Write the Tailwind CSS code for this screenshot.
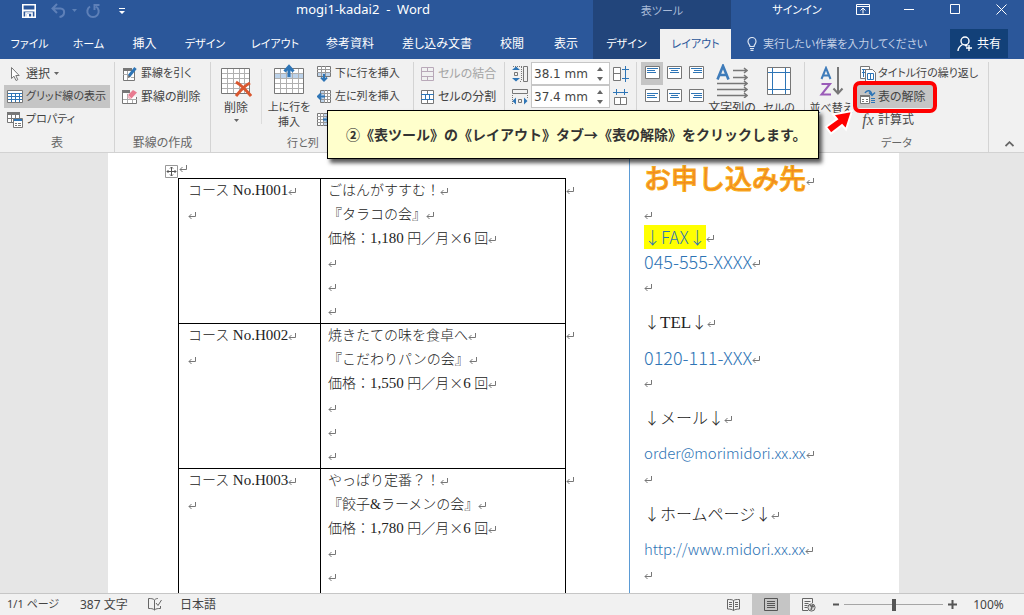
<!DOCTYPE html>
<html lang="ja">
<head>
<meta charset="utf-8">
<title>mogi1-kadai2 - Word</title>
<script src="https://cdn.jsdelivr.net/npm/@tailwindcss/browser@4"></script>
</head>
<body class="flex h-screen flex-col overflow-hidden bg-[#e6e6e6] font-['Noto_Sans','Noto_Sans_CJK_JP',sans-serif] text-xs text-[#444] [font-feature-settings:'palt']">

<svg class="hidden" aria-hidden="true">
  <symbol id="ret" viewBox="0 0 8 8"><path d="M7.500 0v4.500H1M3.500 2L1 4.500L3.500 7" fill="none" stroke="#777"/></symbol>
  <symbol id="down" viewBox="0 0 5 3"><path d="M0 0h5L2.500 3z" fill="#666"/></symbol>
</svg>

<header class="shrink-0 bg-[#2b579a] text-white">
  <div class="flex h-[29px]">
    <div class="flex flex-1">
      <div class="flex w-[133px] shrink-0 items-center pb-2 pl-[21px]">
        <button aria-label="上書き保存"><svg class="size-4" viewBox="0 0 16 16" fill="none" stroke="#fff" stroke-width="1.6"><path d="M1.800 1.800h12.400v12.400H1.800z"/><path d="M2 7.500h12" stroke-width="2"/><path d="M5 14v-4h6v4" /><path d="M6 11h2v3H6z" fill="#fff" stroke="none"/></svg></button>
        <button aria-label="元に戻す" class="ml-[14px]"><svg class="size-4" viewBox="0 0 16 16" fill="none" stroke="#5e80b8" stroke-width="2"><path d="M6 1L1.500 5.500L6 10M2 5.500h7.500c5 0 5 7.500-1 8.500"/></svg></button>
        <svg class="ml-[5px] h-[3px] w-[5px] opacity-60" viewBox="0 0 5 3"><path d="M0 0h5L2.500 3z" fill="#7d9ccb"/></svg>
        <button aria-label="やり直し" class="ml-[8px]"><svg class="size-4" viewBox="0 0 16 16" fill="none" stroke="#5e80b8" stroke-width="2"><path d="M5 3.500a5.700 5.700 0 1 0 6 0M9.500 7V2h5"/></svg></button>
        <button aria-label="クイック アクセス ツール バーのユーザー設定" class="ml-[18px]"><svg class="h-2 w-[6px]" viewBox="0 0 6 8" fill="#fff"><path d="M0 1h6v1H0zM0 4h6L3 7z"/></svg></button>
      </div>
      <div class="flex-1 text-center text-[13px] leading-[18px]">mogi1-kadai2&nbsp; -&nbsp; Word</div>
    </div>
    <div class="w-[138px] bg-[#22457b] pt-[2px] text-center text-[11px] leading-[18px] text-[#a9bbd8]">表ツール</div>
    <div class="flex w-[293px] items-start">
      <button class="ml-[41px] w-[50px] text-[11px] leading-[20px] whitespace-nowrap">サインイン</button>
      <button aria-label="リボンの表示オプション" class="mt-1 ml-[34px]"><svg class="h-[11px] w-[14px]" viewBox="0 0 14 11" fill="none" stroke="#fff"><path d="M.5.5h13v10H.5zM.5 2.500h13M7 9.500V4M4.500 6.500L7 4l2.500 2.500"/></svg></button>
      <button aria-label="最小化" class="mt-1 ml-[34px]"><svg class="h-[11px] w-[10px]" viewBox="0 0 10 11" stroke="#fff"><path d="M0 5.500h10"/></svg></button>
      <button aria-label="最大化" class="mt-1 ml-[36px]"><svg class="size-[11px]" viewBox="0 0 11 11" fill="none" stroke="#fff"><path d="M.5 .5h9v9H.5z"/></svg></button>
      <button aria-label="閉じる" class="mt-1 ml-[35px]"><svg class="size-[11px]" viewBox="0 0 11 11" stroke="#fff"><path d="M.5.5l10 10M10.500.5l-10 10"/></svg></button>
    </div>
  </div>
  <div class="flex h-[30px]">
    <nav class="flex flex-1" role="tablist">
      <button role="tab" class="w-[59px] text-[11px]">ファイル</button>
      <button role="tab" class="w-[59px] text-[11px]">ホーム</button>
      <button role="tab" class="w-[53px]">挿入</button>
      <button role="tab" class="w-[68px] text-[11px]">デザイン</button>
      <button role="tab" class="w-[72px] text-[11px]">レイアウト</button>
      <button role="tab" class="w-[78px]">参考資料</button>
      <button role="tab" class="w-[96px]">差し込み文書</button>
      <button role="tab" class="w-[54px]">校閲</button>
      <button role="tab" class="w-[54px]">表示</button>
      <button role="tab" class="w-[67px] bg-[#22457b] text-[11px]">デザイン</button>
      <button role="tab" aria-selected="true" class="w-[71px] bg-[#f1f1f1] text-[11px] text-[#2b579a]">レイアウト</button>
    </nav>
    <div class="flex w-[293px] items-center">
      <button class="ml-4 flex items-center gap-[6px] text-[11px] text-[#c3d0e6]"><svg class="h-[14px] w-[10px]" viewBox="0 0 10 14" fill="none" stroke="#dbe4f2" stroke-width="1.200"><path d="M3 9.500C3 7.500 1 7 1 4.500a4 4 0 0 1 8 0C9 7 7 7.500 7 9.500zM3 11.500h4M3.500 13.300h3"/></svg>実行したい作業を入力してください</button>
      <button class="mr-4 ml-auto flex h-[29px] w-[58px] items-center justify-center gap-1 self-start bg-[#124078]"><svg class="size-4" viewBox="0 0 16 16" fill="none" stroke="#fff" stroke-width="1.400"><circle cx="8" cy="5" r="4"/><path d="M1 15c0-3 2-5 4.500-6.500M8 9.500c1 0 2 .2 2.500.6M12 9v6M9 12h6"/></svg>共有</button>
    </div>
  </div>
</header>

<section class="relative flex h-[94px] shrink-0 border-b border-[#d2d2d2] bg-[#f1f1f1] pt-[3px] whitespace-nowrap" aria-label="表ツール レイアウト">

  <div class="flex w-[115px] flex-col border-r border-[#d4d4d4] pr-1 pl-1">
    <button class="flex h-[23px] items-center gap-[3px] pl-[3px]"><svg class="size-4" viewBox="0 0 16 16" fill="#fff" stroke="#777"><path d="M4.500 1.500v11l2.500-2.300 2 4.300 1.800-.8-2-4.200h3.400z"/></svg>選択<svg class="ml-px h-[3px] w-[5px]"><use href="#down"/></svg></button>
    <button class="flex h-[23px] items-center gap-[3px] bg-[#c5c5c5] pl-[3px] text-[11px]"><svg class="h-[13px] w-4" viewBox="0 0 16 13"><path d="M.5.5h15v12H.5z" fill="#fff" stroke="#777"/><path d="M1 3.500h14M1 6.500h14M1 9.500h14M4.500 3v9M8.500 3v9M12.500 3v9" stroke="#2e75b6"/></svg>グリッド線の表示</button>
    <button class="flex h-[23px] items-center gap-[3px] pl-[3px] text-[11px]"><svg class="size-4" viewBox="0 0 16 16" fill="#fff" stroke="#777"><path d="M.5.5h12v10H.5z"/><path d="M0 0h13v3H0z" fill="#777" stroke="none"/><path d="M4.500 3v8M8.500 3v8M0 6.500h13"/><path d="M6.500 6.500h9v9h-9z"/><path d="M7 7h8v2H7z" fill="#2e75b6" stroke="none"/><path d="M8 11.500h2M11 11.500h3M8 13.500h2M11 13.500h3"/></svg>プロパティ</button>
    <div class="pt-[3px] text-center leading-[18px] text-[#666]">表</div>
  </div>

  <div class="flex w-[96px] flex-col border-r border-[#d4d4d4]">
    <button class="flex h-[23px] items-center gap-[3px] pl-[7px] text-[11px]"><svg class="size-4" viewBox="0 0 16 16" fill="none"><path d="M1.500 3v11.500h11V3" fill="#fff" stroke="#777"/><path d="M1 2h9v3H1z" fill="#777"/><path d="M5.500 5v9M1 8.500h5M9 11.500h3" stroke="#aaa"/><path d="M7 10l6.500-8" stroke="#2e75b6" stroke-width="3"/><path d="M6 12l.5-3 2 2z" fill="#555"/></svg>罫線を引く</button>
    <button class="flex h-[23px] items-center gap-[3px] pl-[7px]"><svg class="size-4" viewBox="0 0 16 16" fill="none"><path d="M.5 3v11.500h14V8" fill="#fff" stroke="#777"/><path d="M0 1h8v3H0z" fill="#777"/><path d="M5.500 5v9M10.500 10v4M1 10.500h14" stroke="#aaa"/><path d="M6 6l5-5 4 2.500-5.500 6z" fill="#e87b90"/><path d="M6 6l3.500 3.500L8 10.500 5.500 8.500z" fill="#f3b6c1"/></svg>罫線の削除</button>
    <div class="mt-[23px] pt-[3px] text-center leading-[18px] text-[#666]">罫線の作成</div>
  </div>

  <div class="w-[203px] border-r border-[#d4d4d4]">
    <div class="flex h-[69px]">
      <button class="flex w-[50px] flex-col items-center pt-[5px]"><svg class="h-[31px] w-8 shrink-0" viewBox="0 0 32 31" fill="none"><path d="M1.500 1.500h28v25h-28z" fill="#fff" stroke="#777"/><path d="M7.500 2v24M13.500 2v24M19.500 2v24M24.500 2v24M2 6.500h27M2 11.500h27M2 16.500h27M2 21.500h27" stroke="#b0b0b0"/><path d="M16 15c5 3 10 8 15 14M30 16c-6 3-10 8-14 13" stroke="#d9572f" stroke-width="3"/></svg><span class="leading-[20px]">削除</span><svg class="mt-px h-[3px] w-[5px]"><use href="#down"/></svg></button>
      <div class="mt-[7px] h-[55px] w-px bg-[#dcdcdc]"></div>
      <button class="flex w-[54px] flex-col items-center pt-[2px] text-[11px]"><svg class="h-8 w-[30px] shrink-0" viewBox="0 0 30 32" fill="none"><path d="M.5 4.500h29v25H.5z" fill="#fff" stroke="#777"/><path d="M1 9h28v5H1z" fill="#bdd3ea"/><path d="M6.500 5v24M12.500 5v24M18.500 5v24M24.500 5v24M1 9.500h28M1 14.500h28M1 19.500h28M1 24.500h28" stroke="#b0b0b0"/><path d="M15 13V4M10.500 7.500L15 2.500l4.500 5" stroke="#2e75b6" stroke-width="3"/></svg><span class="pt-[3px] leading-[15px]">上に行を<br>挿入</span></button>
      <div class="flex flex-col text-[11px]">
        <button class="flex h-[23px] items-center gap-1 pl-px"><svg class="h-4 w-[14px]" viewBox="0 0 14 16" fill="none"><path d="M.5.500h13v10H.5z" fill="#fff" stroke="#777"/><path d="M1 7h12v3H1z" fill="#bdd3ea"/><path d="M4.500 0v10M8.500 0v10M0 3.500h14M0 6.500h14" stroke="#999"/><path d="M7 8v6M4 11.500l3 3 3-3" stroke="#2e75b6" stroke-width="2"/></svg>下に行を挿入</button>
        <button class="flex h-[23px] items-center gap-1 pl-px"><svg class="h-4 w-[14px]" viewBox="0 0 14 16" fill="none"><path d="M3.500 1.500h10v12h-10z" fill="#fff" stroke="#777"/><path d="M4 2h3v11H4z" fill="#bdd3ea"/><path d="M7.500 1v13M10.500 1v13M4 4.500h10M4 7.500h10M4 10.500h10" stroke="#999"/><path d="M8 7.500H1M4 4.500l-3 3 3 3" stroke="#2e75b6" stroke-width="2"/></svg>左に列を挿入</button>
        <button aria-label="右に列を挿入" class="flex h-[23px] items-center pl-px"><svg class="h-4 w-[14px]" viewBox="0 0 14 16" fill="none"><path d="M.5 1.500h10v12H.5z" fill="#fff" stroke="#777"/><path d="M7 2h3v11H7z" fill="#bdd3ea"/><path d="M3.500 1v13M6.500 1v13M0 4.500h10M0 7.500h10M0 10.500h10" stroke="#999"/><path d="M6 7.500h7M10 4.500l3 3-3 3" stroke="#2e75b6" stroke-width="2"/></svg></button>
      </div>
    </div>
    <div class="pt-[3px] pl-[76px] text-[11px] leading-[18px] text-[#666]">行と列</div>
  </div>

  <div class="w-[91px] border-r border-[#d4d4d4]">
    <button disabled class="flex h-[23px] items-center gap-1 pl-[7px] text-[#a5a5a5]"><svg class="h-[14px] w-[13px]" viewBox="0 0 13 14" fill="none" stroke="#b9a9b9"><path d="M.5.5h12v13H.5zM0 4.500h13M0 9.500h13M6.500 0v4M6.500 10v4"/></svg>セルの結合</button>
    <button class="flex h-[23px] items-center gap-1 pl-[7px]"><svg class="h-[14px] w-[13px]" viewBox="0 0 13 14" fill="#fff" stroke="#777"><path d="M.5.5h12v13H.5zM6.500 0v4M6.500 10v4"/><path d="M0 4.500h13M0 9.500h13M4.500 5v4M8.500 5v4" stroke="#2e75b6"/></svg>セルの分割</button>
  </div>

  <div class="w-[132px] border-r border-[#d4d4d4] pl-[7px]">
    <div class="flex h-[23px] items-center gap-[3px]">
      <svg class="size-4 shrink-0" viewBox="0 0 16 16" fill="none"><path d="M11.500.5h4v15h-4z" stroke="#777"/><path d="M1 .5h9M8 15.500h2M9.500 1v14" stroke="#777" stroke-dasharray="1 1"/><path d="M2.500 6.500h3v3h-3z" stroke="#777"/><path d="M0 4l4-3.500L8 4zM0 12l4 3.500L8 12z" fill="#2e75b6"/></svg>
      <div class="flex h-[23px] w-[79px] shrink-0 items-center border border-[#c6c6c6] bg-white"><input aria-label="高さ" value="38.1 mm" class="w-[65px] pl-[2px] font-['DejaVu_Sans'] text-xs text-[#444] outline-none"><span class="flex flex-col gap-[6px]"><button aria-label="高さを増やす" class="block"><svg class="block h-[4px] w-[6px]" viewBox="0 0 6 4"><path d="M0 4h6L3 0z" fill="#666"/></svg></button><button aria-label="高さを減らす" class="block"><svg class="block h-[4px] w-[6px]" viewBox="0 0 6 4"><path d="M0 0h6L3 4z" fill="#666"/></svg></button></span></div>
      <button aria-label="高さを揃える"><svg class="block size-4" viewBox="0 0 16 16" fill="none"><path d="M.5 1.500h7v13h-7zM0 7.500h8" fill="#fff" stroke="#777"/><path d="M9 3.500h7M9 12.500h7M12.500 0v16" stroke="#2e75b6"/></svg></button>
    </div>
    <div class="flex h-[23px] items-center gap-[3px]">
      <svg class="size-4 shrink-0" viewBox="0 0 16 16" fill="none"><path d="M.5.5h15v4H.5z" stroke="#777"/><path d="M.5 6v9M15.500 6v3" stroke="#777" stroke-dasharray="1 1"/><path d="M6.500 10.500h3v3h-3z" stroke="#777"/><path d="M4 8.500l-3.500 3.500L4 15.500zM12 8.500l3.500 3.500-3.500 3.500z" fill="#2e75b6"/></svg>
      <div class="flex h-[23px] w-[79px] shrink-0 items-center border border-[#c6c6c6] bg-white"><input aria-label="幅" value="37.4 mm" class="w-[65px] pl-[2px] font-['DejaVu_Sans'] text-xs text-[#444] outline-none"><span class="flex flex-col gap-[6px]"><button aria-label="幅を増やす" class="block"><svg class="block h-[4px] w-[6px]" viewBox="0 0 6 4"><path d="M0 4h6L3 0z" fill="#666"/></svg></button><button aria-label="幅を減らす" class="block"><svg class="block h-[4px] w-[6px]" viewBox="0 0 6 4"><path d="M0 0h6L3 4z" fill="#666"/></svg></button></span></div>
      <button aria-label="幅を揃える"><svg class="block size-4" viewBox="0 0 16 16" fill="none"><path d="M1.500 8.500h12v7h-12zM7.500 8v8" fill="#fff" stroke="#777"/><path d="M0 3.500h15M3.500 0v6M11.500 0v6" stroke="#2e75b6"/></svg></button>
    </div>
  </div>

  <div class="flex w-[168px] border-r border-[#d4d4d4] pl-1">
    <div class="grid h-[46px] w-[66px] grid-cols-3">
      <button aria-label="両端揃え (上)" class="flex items-start justify-center bg-[#c5c5c5] pt-1"><svg class="h-[13px] w-[15px]" viewBox="0 0 15 13"><path d="M.5.5h14v12H.5z" fill="#fff" stroke="#777"/><path d="M2 2.500h11M2 4.500h8M2 6.500h9" stroke="#2e75b6"/></svg></button>
      <button aria-label="上揃え (中央)" class="flex items-start justify-center pt-1"><svg class="h-[13px] w-[15px]" viewBox="0 0 15 13"><path d="M.5.5h14v12H.5z" fill="#fff" stroke="#777"/><path d="M2 2.500h11M4 4.500h7M3 6.500h9" stroke="#2e75b6"/></svg></button>
      <button aria-label="上揃え (右)" class="flex items-start justify-center pt-1"><svg class="h-[13px] w-[15px]" viewBox="0 0 15 13"><path d="M.5.5h14v12H.5z" fill="#fff" stroke="#777"/><path d="M2 2.500h11M5 4.500h8M4 6.500h9" stroke="#2e75b6"/></svg></button>
      <button aria-label="両端揃え (中央)" class="flex items-start justify-center pt-1"><svg class="h-[13px] w-[15px]" viewBox="0 0 15 13"><path d="M.5.5h14v12H.5z" fill="#fff" stroke="#777"/><path d="M2 4.500h11M2 6.500h8M2 8.500h10" stroke="#2e75b6"/></svg></button>
      <button aria-label="中央揃え" class="flex items-start justify-center pt-1"><svg class="h-[13px] w-[15px]" viewBox="0 0 15 13"><path d="M.5.5h14v12H.5z" fill="#fff" stroke="#777"/><path d="M2 4.500h11M4 6.500h7M3 8.500h9" stroke="#2e75b6"/></svg></button>
      <button aria-label="中央揃え (右)" class="flex items-start justify-center pt-1"><svg class="h-[13px] w-[15px]" viewBox="0 0 15 13"><path d="M.5.5h14v12H.5z" fill="#fff" stroke="#777"/><path d="M2 4.500h11M5 6.500h8M4 8.500h9" stroke="#2e75b6"/></svg></button>
    </div>
    <button class="flex w-[50px] flex-col items-center pt-[2px]"><svg class="h-[34px] w-8 shrink-0" viewBox="0 0 32 34" fill="none"><path d="M1.500 15.500L7 2l5.500 13.500M3.500 11h7" stroke="#3f7cba" stroke-width="2.600"/><path d="M17 6.500h14M17 13.500h14M1 19.500h30M1 25.500h30M1 31.500h30M28 4l3 2.500L28 9M28 11l3 2.500-3 2.500M28 17l3 2.500-3 2.500M28 23l3 2.500-3 2.500M28 29l3 2.500-3 2.500" stroke="#777" stroke-width="1.500"/></svg><span class="leading-[20px]">文字列の</span></button>
    <button class="flex w-[44px] flex-col items-center pt-[5px] text-[11px]"><svg class="h-[31px] w-6 shrink-0" viewBox="0 0 24 31" fill="none"><path d="M.5.5h23v27H.5z" fill="#fff" stroke="#777"/><path d="M5.500 1v26M18.500 1v26M1 5.500h22M1 22.500h22" stroke="#2e75b6"/></svg><span class="leading-[20px]">セルの</span></button>
  </div>

  <div class="w-[184px] border-r border-[#d4d4d4]">
    <div class="flex h-[69px]">
      <button class="flex w-[52px] flex-col items-center pt-[4px] text-[11px]"><svg class="h-8 w-7 shrink-0" viewBox="0 0 28 32" fill="none"><path d="M4.500 13L9 2l4.500 11M6 9.500h6" stroke="#3f7cba" stroke-width="2"/><path d="M4.500 18h8.500L4.500 28.500H14" stroke="#9b5cb8" stroke-width="2"/><path d="M21 1v26M16.500 22.500L21 27.500l4.500-5" stroke="#777" stroke-width="2"/></svg><span class="leading-[20px]">並べ替え</span></button>
      <div class="flex flex-1 flex-col items-start">
        <button class="flex h-[23px] items-center gap-[2px] pl-[3px] text-[11px]"><svg class="size-4 shrink-0" viewBox="0 0 16 16" fill="#fff" stroke="#777"><path d="M.5.5h9v12h-9z"/><path d="M2 3.500h6M3.500 3v8M2 6.500h3" stroke="#2e75b6"/><path d="M5.500 3.500h7l3 3v9h-10z"/><path d="M7.500 7.500h6v6h-6zM10.500 7v7" stroke="#2e75b6"/></svg>タイトル行の繰り返し</button>
        <button class="flex h-[23px] w-[79px] items-center gap-[2px] bg-[#c5c5c5] pl-[3px]"><svg class="size-4 shrink-0" viewBox="0 0 16 16" fill="none"><path d="M.5 6.500h9v8h-9z" fill="#fff" stroke="#777"/><path d="M0 6h10v2H0z" fill="#777"/><path d="M2 10.500h2M6 10.500h2M2 12.500h2M6 12.500h2" stroke="#777"/><path d="M11 9.500h4M11 11.500h4M11 13.500h4" stroke="#2e75b6"/><path d="M5 4c2-3.500 6-3 7 2M9 3.500l3 3 3-3" stroke="#2e75b6" stroke-width="1.500"/></svg>表の解除</button>
        <button class="flex h-[23px] items-center gap-[2px] pl-[3px]"><span class="w-4 text-center font-['Liberation_Serif'] text-base leading-4 text-[#555] italic">fx</span>計算式</button>
      </div>
    </div>
    <div class="pt-[3px] text-center text-[11px] leading-[18px] text-[#666]">データ</div>
  </div>
  <button aria-label="リボンを折りたたむ" class="mt-auto mr-[10px] mb-[5px] ml-auto"><svg class="block h-[6px] w-[9px]" viewBox="0 0 9 6" fill="none" stroke="#666" stroke-width="1.800"><path d="M.5 5L4.500 1.200 8.500 5"/></svg></button>

  <div class="absolute top-[22px] left-[853px] h-[32px] w-[84px] rounded-[7px] border-4 border-[#f00]"></div>
  <svg class="absolute top-[50px] left-[824px] h-[26px] w-[30px]" viewBox="0 0 30 26"><path d="M28 2L9 5.500l4 4.500L2 18l5 6.500L18 16l4 4.500z" fill="#f00" stroke="#fff" stroke-width="2"/></svg>
  <div class="absolute top-[51px] left-[327px] z-10 flex h-[49px] w-[492px] items-center border border-black bg-[#ffffcc] pb-[2px] pl-[18px] font-['Noto_Sans_CJK_JP',sans-serif] text-sm font-bold text-[#333] shadow-[3px_4px_4px_rgba(0,0,0,0.65)] [font-feature-settings:normal]">②《表ツール》の《レイアウト》タブ→《表の解除》をクリックします。</div>
</section>

<main class="flex min-h-0 flex-1 justify-center overflow-hidden pr-[17px] [font-feature-settings:normal]">
  <article class="flex w-[791px] bg-white">
    <div class="w-[521px] pt-3 font-['Liberation_Serif','Noto_Sans_CJK_JP',serif] text-sm leading-6 font-normal text-[#222]">
      <div class="flex pl-[57px]"><svg class="block size-[13px]" viewBox="0 0 13 13" fill="none" stroke="#555"><path d="M.5.5h12v12H.5z" stroke="#999"/><path d="M6.500 2v9M2 6.500h9M5 3.500l1.500-1.500L8 3.500M5 9.500L6.500 11 8 9.500M3.500 5L2 6.500 3.500 8M9.500 5L11 6.500 9.500 8"/></svg><svg class="ml-px size-2"><use href="#ret"/></svg></div>
      <table class="ml-[70px] border-collapse text-left">
        <tbody>
          <tr class="align-top"><td class="w-[142px] border border-black pl-[9px]"><span class="font-light">コース</span> <span class="text-[15px] leading-none">No.H001</span><svg class="inline size-2"><use href="#ret"/></svg><br><svg class="inline size-2"><use href="#ret"/></svg></td><td class="w-[245px] border border-black pl-[7px]"><span class="font-light">ごはんがすすむ！</span><svg class="inline size-2"><use href="#ret"/></svg><br><span class="font-light">『タラコの会』</span><svg class="inline size-2"><use href="#ret"/></svg><br><span class="font-light">価格：</span><span class="text-[15px] leading-none">1,180</span> <span class="font-['Noto_Sans_CJK_JP'] leading-none font-light">円／月×</span><span class="text-[15px] leading-none">6</span> <span class="font-light">回</span><svg class="inline size-2"><use href="#ret"/></svg><br><svg class="inline size-2"><use href="#ret"/></svg><br><svg class="inline size-2"><use href="#ret"/></svg><br><svg class="inline size-2"><use href="#ret"/></svg></td><td><svg class="inline size-2"><use href="#ret"/></svg></td></tr>
          <tr class="align-top"><td class="border border-black pl-[9px]"><span class="font-light">コース</span> <span class="text-[15px] leading-none">No.H002</span><svg class="inline size-2"><use href="#ret"/></svg><br><svg class="inline size-2"><use href="#ret"/></svg></td><td class="border border-black pl-[7px]"><span class="font-light">焼きたての味を食卓へ</span><svg class="inline size-2"><use href="#ret"/></svg><br><span class="font-light">『こだわりパンの会』</span><svg class="inline size-2"><use href="#ret"/></svg><br><span class="font-light">価格：</span><span class="text-[15px] leading-none">1,550</span> <span class="font-['Noto_Sans_CJK_JP'] leading-none font-light">円／月×</span><span class="text-[15px] leading-none">6</span> <span class="font-light">回</span><svg class="inline size-2"><use href="#ret"/></svg><br><svg class="inline size-2"><use href="#ret"/></svg><br><svg class="inline size-2"><use href="#ret"/></svg><br><svg class="inline size-2"><use href="#ret"/></svg></td><td><svg class="inline size-2"><use href="#ret"/></svg></td></tr>
          <tr class="align-top"><td class="border border-black pl-[9px]"><span class="font-light">コース</span> <span class="text-[15px] leading-none">No.H003</span><svg class="inline size-2"><use href="#ret"/></svg><br><svg class="inline size-2"><use href="#ret"/></svg></td><td class="border border-black pl-[7px]"><span class="font-light">やっぱり定番？！</span><svg class="inline size-2"><use href="#ret"/></svg><br><span class="font-light">『餃子</span>&amp;<span class="font-light">ラーメンの会』</span><svg class="inline size-2"><use href="#ret"/></svg><br><span class="font-light">価格：</span><span class="text-[15px] leading-none">1,780</span> <span class="font-['Noto_Sans_CJK_JP'] leading-none font-light">円／月×</span><span class="text-[15px] leading-none">6</span> <span class="font-light">回</span><svg class="inline size-2"><use href="#ret"/></svg><br><svg class="inline size-2"><use href="#ret"/></svg><br><svg class="inline size-2"><use href="#ret"/></svg><br><svg class="inline size-2"><use href="#ret"/></svg></td><td><svg class="inline size-2"><use href="#ret"/></svg></td></tr>
        </tbody>
      </table>
    </div>
    <div class="flex-1 border-l border-[#5b9bd5] pl-[14px] font-['Noto_Sans_CJK_JP',sans-serif] text-base leading-6 font-light text-[#2e74b5]">
      <h1 class="h-12 text-[27px] leading-[50px] font-medium text-[#f08a24] [-webkit-text-stroke:1px_#fbae17]">お申し込み先<svg class="inline size-2"><use href="#ret"/></svg></h1>
      <p class="h-6"><svg class="inline size-2"><use href="#ret"/></svg></p>
      <p class="flex h-6 items-center text-[17px]"><span class="bg-[#ff0]">↓FAX↓</span><svg class="mt-1 size-2"><use href="#ret"/></svg></p>
      <p class="h-6 text-[18px]">045-555-XXXX<svg class="inline size-2"><use href="#ret"/></svg></p>
      <p class="h-6"><svg class="inline size-2"><use href="#ret"/></svg></p>
      <p class="h-12 leading-[48px] text-[#222]">↓<span class="font-['Liberation_Serif',serif] text-[17px] leading-none font-normal">TEL</span>↓<svg class="inline size-2"><use href="#ret"/></svg></p>
      <p class="h-6 text-[18px]">0120-111-XXX<svg class="inline size-2"><use href="#ret"/></svg></p>
      <p class="h-6"><svg class="inline size-2"><use href="#ret"/></svg></p>
      <p class="h-12 leading-[48px] text-[#222]">↓メール↓<svg class="inline size-2"><use href="#ret"/></svg></p>
      <p class="h-6 text-[15px]"><a href="mailto:order@morimidori.xx.xx">order@morimidori.xx.xx</a><svg class="inline size-2"><use href="#ret"/></svg></p>
      <p class="h-6"><svg class="inline size-2"><use href="#ret"/></svg></p>
      <p class="h-12 leading-[48px] text-[#222]">↓ホームページ↓<svg class="inline size-2"><use href="#ret"/></svg></p>
      <p class="h-6 text-[15px]"><a href="http://www.midori.xx.xx">http://www.midori.xx.xx</a><svg class="inline size-2"><use href="#ret"/></svg></p>
      <p class="h-6"><svg class="inline size-2"><use href="#ret"/></svg></p>
    </div>
  </article>
</main>

<footer class="flex h-[22px] shrink-0 items-center border-t border-[#c6c6c6] bg-[#f1f1f1] pr-[19px] pl-[7px]">
  <span class="w-[73px] text-[11px]">1/1 ページ</span>
  <span class="w-[68px]">387 文字</span>
  <button aria-label="文章校正" class="w-8"><svg class="block h-[13px] w-[14px]" viewBox="0 0 14 13" fill="none" stroke="#666"><path d="M6.500 12V2C5 .5 3 .5.5.500v10c2.500 0 4.500 0 6 1.500 1.500-1.500 3.500-1.500 6-1.500V8M6.500 2C8 .5 9 .5 10 .500M8 5l2 2.500L13.500 2"/></svg></button>
  <span>日本語</span>
  <div class="ml-auto flex h-full items-center">
    <button aria-label="閲覧モード"><svg class="block h-3 w-[13px]" viewBox="0 0 13 12" fill="none" stroke="#666"><path d="M6.500 11.500V1.500c-1.500-1-3-1-6-1v9.500c3 0 4.500.5 6 1.500 1.500-1 3-1.500 6-1.500V.5c-3 0-4.500 0-6 1M2 3.500h3M2 5.500h3M2 7.500h3M8 3.500h3M8 5.500h3M8 7.500h3"/></svg></button>
    <button aria-label="印刷レイアウト" class="ml-3 flex h-full w-[38px] items-center justify-center bg-[#c5c5c5]"><svg class="block h-[13px] w-[14px]" viewBox="0 0 14 13" fill="none" stroke="#555"><path d="M.5.5h13v12H.5zM3 3.500h8M3 5.500h8M3 7.500h8M3 9.500h8"/></svg></button>
    <button aria-label="Web レイアウト" class="ml-3"><svg class="block size-[14px]" viewBox="0 0 14 14" fill="none" stroke="#666"><path d="M6 12.500H.5V.5h10V5M2.500 3.500h6M2.500 5.500h4M2.500 7.500h3M2.500 9.500h3"/><circle cx="9.500" cy="9.500" r="3.600" fill="#ddd"/><path d="M8 7l2 2-1 3M10 7l2 2" stroke-width="1.500"/></svg></button>
    <button aria-label="縮小" class="ml-[17px]"><svg class="block h-[9px] w-[6px]" viewBox="0 0 6 9"><path d="M0 3.500h6v2H0z" fill="#555"/></svg></button>
    <input type="range" min="10" max="190" value="100" aria-label="ズーム" class="mx-[5px] h-3 w-[99px] appearance-none bg-[linear-gradient(#a6a6a6,#a6a6a6)] bg-size-[100%_1px] bg-center bg-no-repeat [&::-webkit-slider-thumb]:h-3 [&::-webkit-slider-thumb]:w-1 [&::-webkit-slider-thumb]:appearance-none [&::-webkit-slider-thumb]:bg-[#555]">
    <button aria-label="拡大"><svg class="block size-[9px]" viewBox="0 0 9 9"><path d="M0 3.500h9v2H0zM3.500 0h2v9h-2z" fill="#555"/></svg></button>
    <button class="ml-[15px] w-[33px]">100%</button>
  </div>
</footer>
</body>
</html>
